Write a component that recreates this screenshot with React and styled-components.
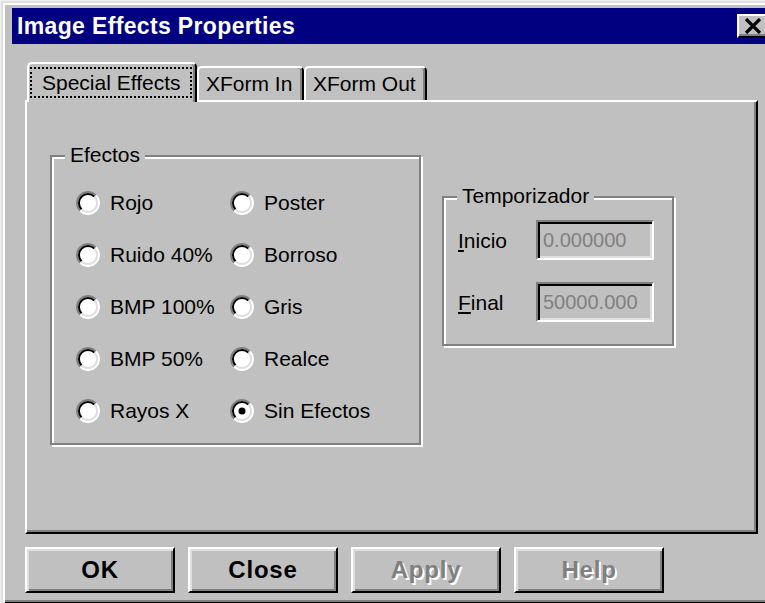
import React from "react";
import styled, { createGlobalStyle } from "styled-components";

const GlobalStyle = createGlobalStyle`
  html, body {
    margin: 0;
    padding: 0;
    background: #f0f0f0;
    overflow: hidden;
  }
  * {
    box-sizing: border-box;
  }
`;

const Dialog = styled.div`
  width: 780px;
  height: 603px;
  margin: 1px 0 0 1px;
  padding: 7px 0 0 11px;
  background: #c0c0c0;
  font-family: "Liberation Sans", Arial, sans-serif;
  font-size: 21px;
  color: #000;
  box-shadow: inset 2px 2px 0 #dfdfdf, inset 4px 4px 0 #fff,
    inset -2px -2px 0 #000, inset -4px -4px 0 #808080;
`;

const TitleBar = styled.div`
  height: 36px;
  margin-right: 8px;
  padding: 0 4px 0 5px;
  display: flex;
  align-items: center;
  justify-content: space-between;
  background: #000080;
  color: #fff;
`;

const Title = styled.span`
  font-size: 23px;
  font-weight: bold;
  letter-spacing: 0.35px;
`;

const CloseBox = styled.div`
  width: 32px;
  height: 24px;
  display: flex;
  align-items: center;
  justify-content: center;
  background: #c0c0c0;
  border: 2px solid;
  border-color: #fff #000 #000 #fff;
  box-shadow: inset -2px -2px 0 #808080;
`;

const Content = styled.div`
  padding: 18px 0 0 13px;
`;

const TabStrip = styled.div`
  height: 38px;
  padding-left: 2px;
  display: flex;
  align-items: flex-end;
`;

const Tab = styled.div`
  position: relative;
  z-index: ${(p) => (p.$active ? 2 : 1)};
  width: ${(p) => p.$width}px;
  height: ${(p) => (p.$active ? 40 : 34)}px;
  margin-bottom: ${(p) => (p.$active ? -2 : 0)}px;
  padding: ${(p) => (p.$active ? "3px 2px 0 1px" : "2px 0 0 7px")};
  display: flex;
  align-items: flex-start;
  background: #c0c0c0;
  border-style: solid;
  border-width: 2px 2px 0 2px;
  border-color: #fff #000 #fff #fff;
  border-radius: 5px 5px 0 0;
  box-shadow: inset -2px 0 0 #808080;
  line-height: 28px;
  white-space: nowrap;
`;

const FocusLabel = styled.span`
  padding: 0 9px 0 10px;
  border: 2px dotted #000;
  line-height: 27px;
`;

const Panel = styled.div`
  width: 733px;
  height: 434px;
  padding: 53px 0 0 23px;
  display: flex;
  align-items: flex-start;
  gap: 21px;
  border-style: solid;
  border-width: 2px;
  border-color: #fff #000 #000 #fff;
  box-shadow: inset -2px -2px 0 #808080;
`;

const GroupBox = styled.div`
  position: relative;
  width: ${(p) => p.$width}px;
  height: ${(p) => p.$height}px;
  margin-top: ${(p) => p.$top || 0}px;
  border: 2px solid #808080;
  box-shadow: inset 2px 2px 0 #fff, 2px 2px 0 #fff;
`;

const Legend = styled.span`
  position: absolute;
  top: -14px;
  left: 13px;
  padding: 0 5px;
  background: #c0c0c0;
  line-height: 24px;
`;

const RadioGrid = styled.div`
  padding: 20px 0 0 24px;
  display: grid;
  grid-template-columns: 154px 1fr;
  grid-auto-flow: column;
  grid-template-rows: repeat(5, 52px);
`;

const RadioRow = styled.label`
  display: flex;
  align-items: center;
  gap: 10px;
  white-space: nowrap;
`;

const FieldGrid = styled.div`
  padding: 22px 0 0 14px;
  display: grid;
  grid-template-columns: 78px 118px;
  grid-auto-rows: 40px;
  row-gap: 22px;
  align-items: center;
`;

const FieldLabel = styled.span`
  padding-top: 2px;
`;

const Field = styled.input`
  width: 118px;
  height: 40px;
  padding: 0 0 0 5px;
  font: inherit;
  font-size: 20px;
  color: #808080;
  -webkit-text-fill-color: #808080;
  background: #c0c0c0;
  border: 2px solid;
  border-color: #808080 #fff #fff #808080;
  box-shadow: inset 2px 2px 0 #000, inset -2px -2px 0 #dfdfdf;
  outline: none;
`;

const ButtonRow = styled.div`
  margin-top: 13px;
  display: flex;
  gap: 13px;
`;

const Button = styled.button`
  width: 150px;
  height: 46px;
  padding: 0;
  font-family: "Liberation Sans", Arial, sans-serif;
  font-size: 24px;
  font-weight: bold;
  letter-spacing: 0.8px;
  color: #000;
  background: #c0c0c0;
  border: 2px solid;
  border-color: #fff #000 #000 #fff;
  box-shadow: inset 2px 2px 0 #dfdfdf, inset -2px -2px 0 #808080;

  &:disabled {
    color: #808080;
    text-shadow: 2px 2px 0 #fff;
  }
`;

const CloseGlyph = () => (
  <svg width="18" height="16" viewBox="0 0 18 16">
    <path d="M2 1 L16 15 M16 1 L2 15" stroke="#000" strokeWidth="3.2" />
  </svg>
);

// classic sunken round radio, 24px
const RadioDot = ({ checked }) => (
  <svg width="24" height="24" viewBox="0 0 24 24">
    <circle cx="12" cy="12" r="10" fill="#fff" />
    <path d="M4.2 19.8 A11 11 0 0 1 19.8 4.2" fill="none" stroke="#808080" strokeWidth="2" />
    <path d="M19.8 4.2 A11 11 0 0 1 4.2 19.8" fill="none" stroke="#fff" strokeWidth="2" />
    <path d="M5.6 18.4 A9 9 0 0 1 18.4 5.6" fill="none" stroke="#000" strokeWidth="2" />
    <path d="M18.4 5.6 A9 9 0 0 1 5.6 18.4" fill="none" stroke="#dfdfdf" strokeWidth="2" />
    {checked && <circle cx="12" cy="12" r="3.5" fill="#000" />}
  </svg>
);

const effects = [
  "Rojo",
  "Ruido 40%",
  "BMP 100%",
  "BMP 50%",
  "Rayos X",
  "Poster",
  "Borroso",
  "Gris",
  "Realce",
  "Sin Efectos",
];

export default function App() {
  return (
    <>
      <GlobalStyle />
      <Dialog>
        <TitleBar>
          <Title>Image Effects Properties</Title>
          <CloseBox>
            <CloseGlyph />
          </CloseBox>
        </TitleBar>
        <Content>
          <TabStrip>
            <Tab $active $width={170}>
              <FocusLabel>Special Effects</FocusLabel>
            </Tab>
            <Tab $width={107}>XForm In</Tab>
            <Tab $width={123}>XForm Out</Tab>
          </TabStrip>
          <Panel>
            <GroupBox $width={371} $height={290}>
              <Legend>Efectos</Legend>
              <RadioGrid>
                {effects.map((name) => (
                  <RadioRow key={name}>
                    <RadioDot checked={name === "Sin Efectos"} />
                    {name}
                  </RadioRow>
                ))}
              </RadioGrid>
            </GroupBox>
            <GroupBox $width={232} $height={150} $top={41}>
              <Legend>Temporizador</Legend>
              <FieldGrid>
                <FieldLabel>
                  <u>I</u>nicio
                </FieldLabel>
                <Field readOnly value="0.000000" />
                <FieldLabel>
                  <u>F</u>inal
                </FieldLabel>
                <Field readOnly value="50000.000" />
              </FieldGrid>
            </GroupBox>
          </Panel>
          <ButtonRow>
            <Button>OK</Button>
            <Button>Close</Button>
            <Button disabled>Apply</Button>
            <Button disabled>Help</Button>
          </ButtonRow>
        </Content>
      </Dialog>
    </>
  );
}
